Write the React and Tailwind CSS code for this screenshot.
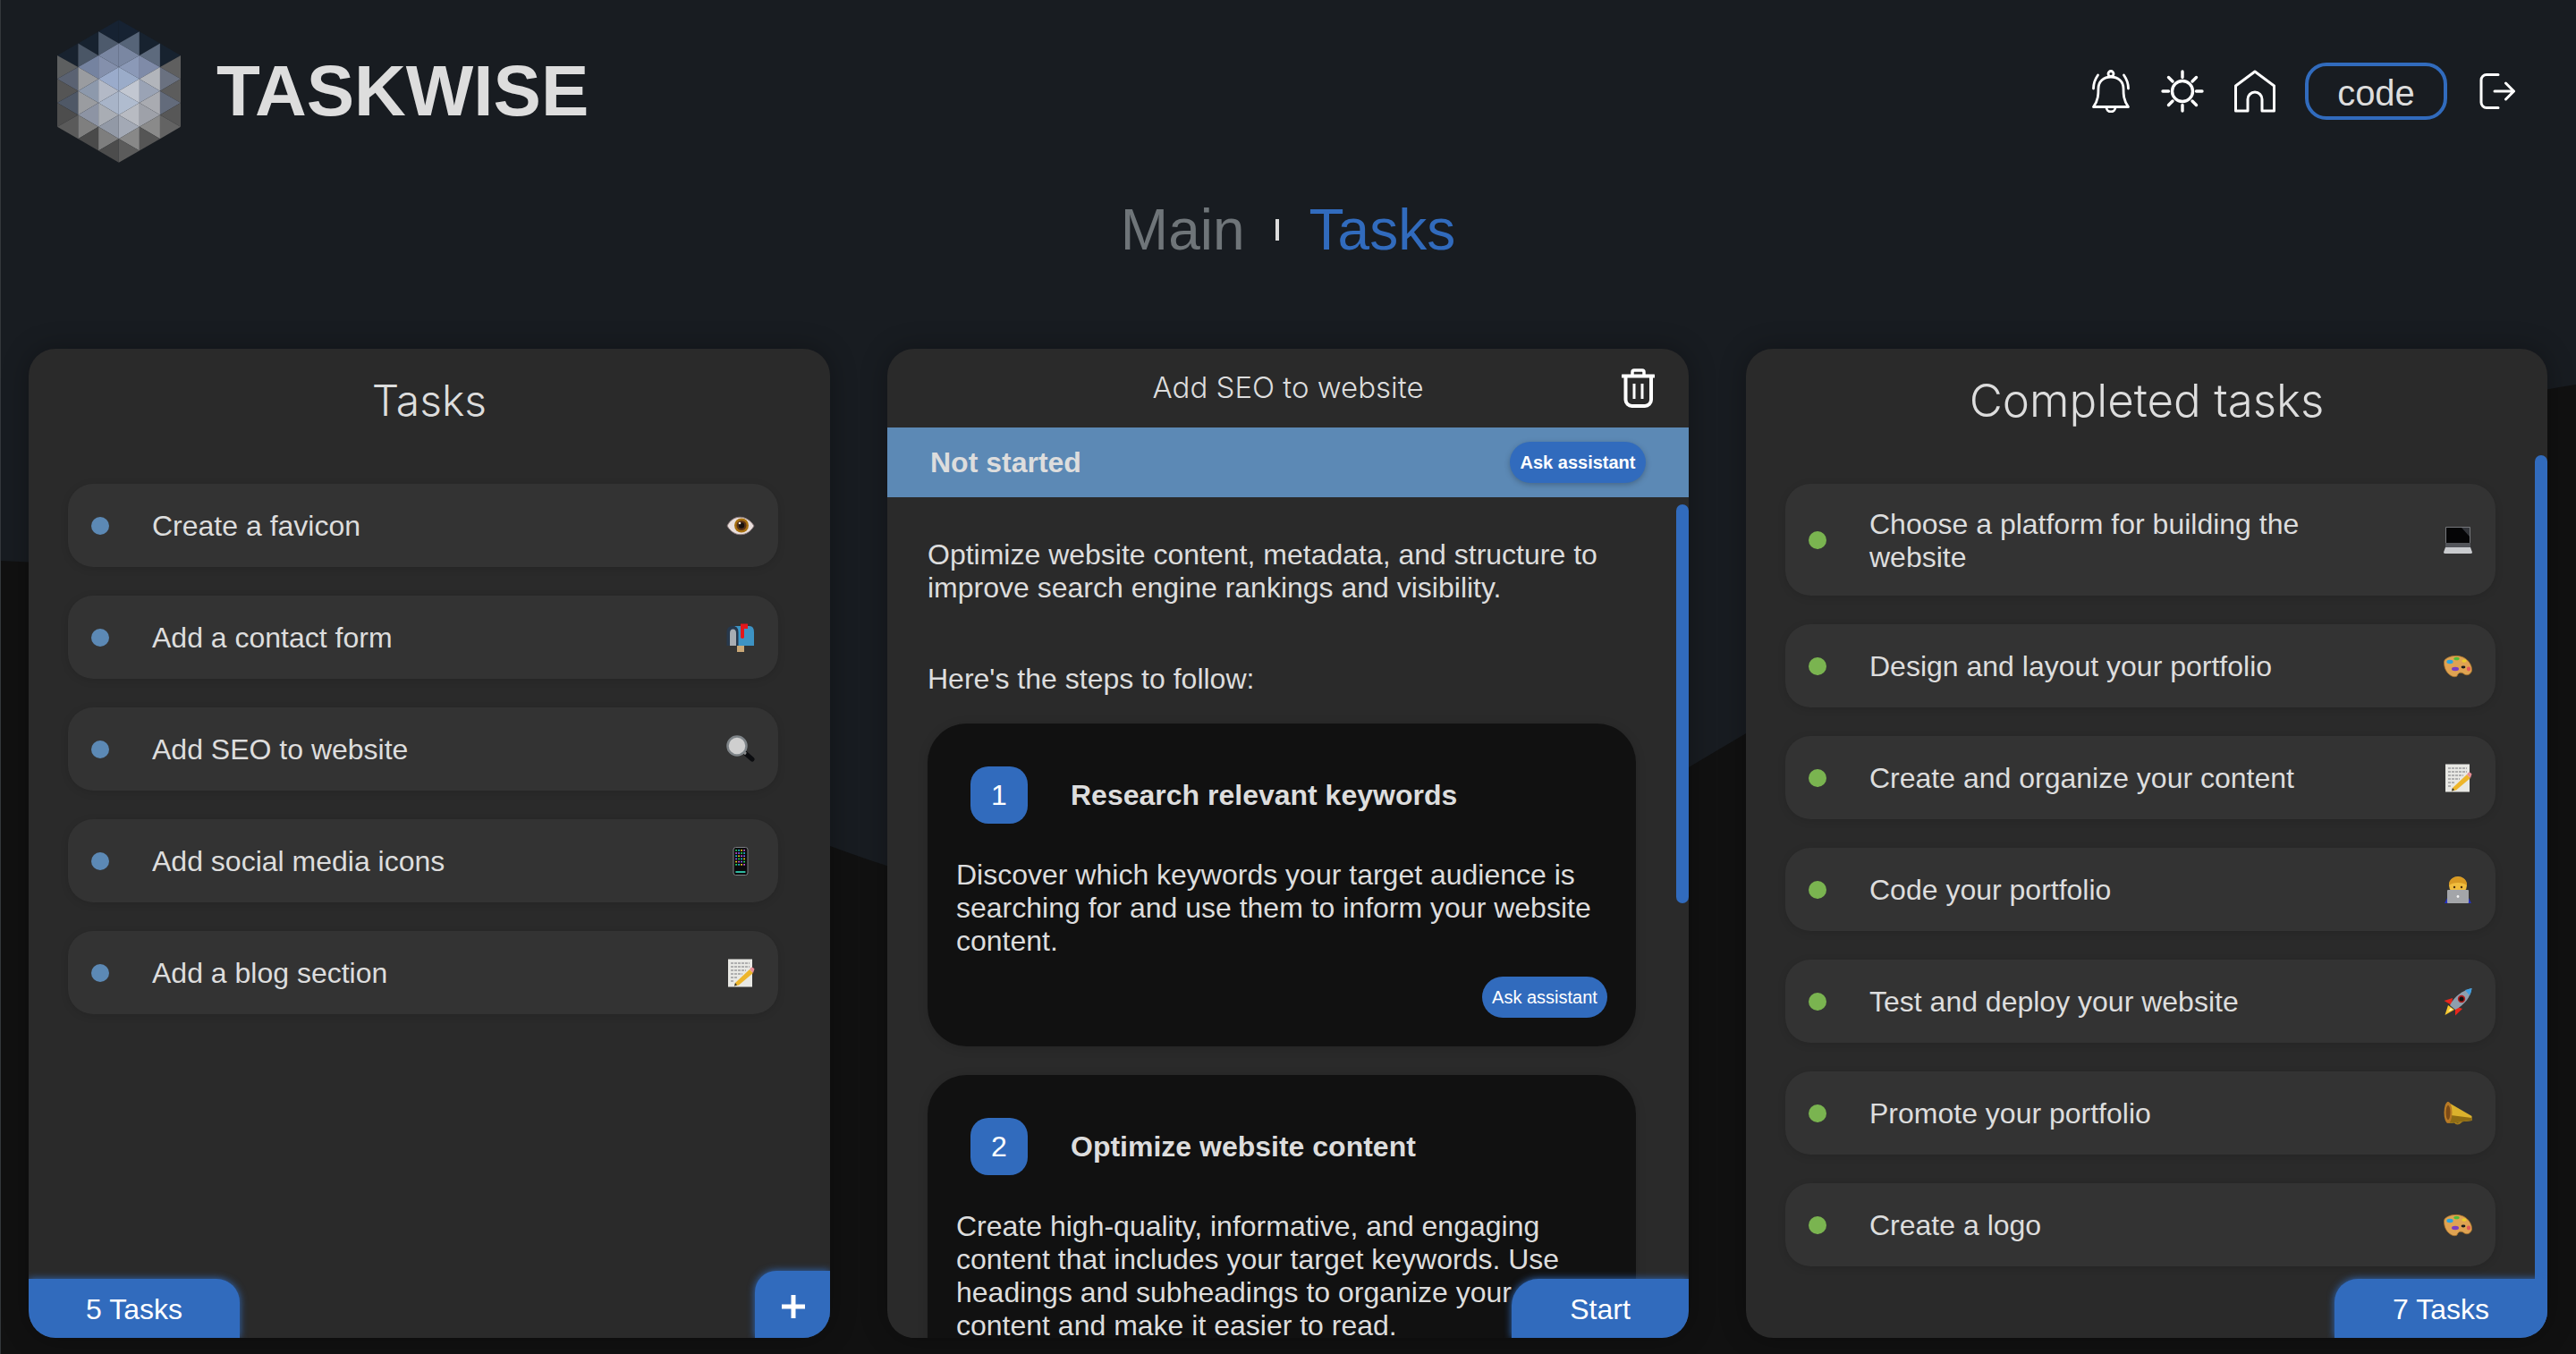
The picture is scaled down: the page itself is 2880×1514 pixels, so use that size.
const todo = [
  { label: 'Create a favicon', icon: 'eye' },
  { label: 'Add a contact form', icon: 'mailbox' },
  { label: 'Add SEO to website', icon: 'search' },
  { label: 'Add social media icons', icon: 'phone' },
  { label: 'Add a blog section', icon: 'memo' },
]

const done = [
  { label: 'Choose a platform for building the website', icon: 'laptop' },
  { label: 'Design and layout your portfolio', icon: 'palette' },
  { label: 'Create and organize your content', icon: 'memo' },
  { label: 'Code your portfolio', icon: 'coder' },
  { label: 'Test and deploy your website', icon: 'rocket' },
  { label: 'Promote your portfolio', icon: 'horn' },
  { label: 'Create a logo', icon: 'palette' },
]

const steps = [
  {
    n: 1,
    title: 'Research relevant keywords',
    text: 'Discover which keywords your target audience is searching for and use them to inform your website content.',
  },
  {
    n: 2,
    title: 'Optimize website content',
    text: 'Create high-quality, informative, and engaging content that includes your target keywords. Use headings and subheadings to organize your content and make it easier to read.',
  },
]

// logo lattice, one list of colours per vertical strip, top to bottom
const strips = [
  { x: [192, 262], ys: [146, 186, 225, 265, 305, 345, 385, 425, 465], first: 1, fill: ['#18222f', '#5d5f60', '#5a6272', '#555555', '#4f5866', '#4d4d4d', '#5a5a5a'] },
  { x: [262, 330], ys: [106, 146, 186, 225, 265, 305, 345, 385, 425, 465, 505], first: 1, fill: ['#17222f', '#4a5666', '#7583a0', '#9a9ca0', '#8d99ac', '#9a9ca0', '#8d94a4', '#7f7f7f', '#4a4a4a'] },
  { x: [330, 398], ys: [67, 106, 146, 186, 225, 265, 305, 345, 385, 425, 465, 505, 545], first: 1, fill: ['#162232', '#4d5a6c', '#7a87a2', '#8490ac', '#9aabcb', '#b3b9c6', '#a8b4c8', '#a9adb4', '#9299a6', '#7e7e7e', '#4c4c4c'] },
  { x: [398, 467], ys: [67, 106, 146, 186, 225, 265, 305, 345, 385, 425, 465, 505, 545], first: 0, fill: ['#162232', '#566478', '#7a87a2', '#8b99b7', '#9bacc9', '#c2c7d1', '#b0bccf', '#b8bbc2', '#a3a9b5', '#888888', '#5b5b5b'] },
  { x: [467, 536], ys: [106, 146, 186, 225, 265, 305, 345, 385, 425, 465, 505], first: 0, fill: ['#17222f', '#5d6a7d', '#7f8ba8', '#b2b5bb', '#9aa3b5', '#a9abb1', '#9ea1a9', '#8a8a8a', '#555555'] },
  { x: [536, 605], ys: [146, 186, 225, 265, 305, 345, 385, 425, 465], first: 0, fill: ['#17222f', '#5f5f5f', '#6a7180', '#5c5c5c', '#636b7b', '#575757', '#636363'] },
]

function Logo() {
  return (
    <svg className="h-[160px] w-[138px] shrink-0" viewBox="192 67 413 478">
      {strips.map((strip) =>
        strip.fill.map((fill, i) => {
          const pts = [0, 1, 2].map((k) => `${strip.x[(i + k + strip.first) % 2]},${strip.ys[i + k]}`)
          return <polygon fill={fill} key={`${strip.x[0]}-${i}`} points={pts.join(' ')} />
        }),
      )}
    </svg>
  )
}

function Emoji({ name }) {
  const cls = 'h-8 w-8 shrink-0'
  if (name === 'eye') {
    return (
      <svg className={cls} viewBox="0 0 32 32">
        <path d="M1 16 C7 3 23 3 31 16 C24 29 8 29 1 16Z" fill="#e9dfdc" stroke="#8b7a7c" strokeWidth="1" />
        <circle cx="17" cy="15.5" r="8" fill="#a8700f" />
        <circle cx="17" cy="15.5" r="5.5" fill="#5a3318" />
        <circle cx="17" cy="15.5" r="3.2" fill="#17100c" />
        <circle cx="15" cy="13" r="1.3" fill="#f4e9e2" />
      </svg>
    )
  }
  if (name === 'mailbox') {
    return (
      <svg className={cls} viewBox="0 0 32 32">
        <rect fill="#c9a877" height="7" width="8" x="12" y="25" />
        <path d="M7 3 H26 Q31 3 31 10 V25 H13 V10 Q13 3 7 3Z" fill="#3d93c4" />
        <path d="M0.5 25 V10 Q0.5 3 7 3 Q13.5 3 13.5 10 V25Z" fill="#27384c" />
        <path d="M4 25 V11 Q4 6.5 7.5 6.5 Q11 6.5 11 11 V25Z" fill="#a8adb3" />
        <path d="M16 0.5 H24 V6 H20 V16 Q18 18 16 16Z" fill="#e3171b" />
      </svg>
    )
  }
  if (name === 'search') {
    return (
      <svg className={cls} viewBox="0 0 32 32">
        <path d="M21 20 L29 27" stroke="#0c0d10" strokeLinecap="round" strokeWidth="5" />
        <path d="M18 18 L22 21" stroke="#8d8d8d" strokeWidth="3" />
        <circle cx="12" cy="12" fill="#cfcfcf" r="10.5" stroke="#7e8488" strokeWidth="2.5" />
      </svg>
    )
  }
  if (name === 'phone') {
    const colors = ['#27e05f', '#f4f4f4', '#cc55dd', '#888888', '#22c5e0', '#f4f4f4', '#8866ff', '#f08a20', '#f0d020', '#f040a0']
    return (
      <svg className={cls} viewBox="0 0 32 32">
        <rect fill="#0a0a0c" height="31" rx="2.5" stroke="#7c7e82" strokeWidth="1" width="16" x="8" y="0.5" />
        {Array.from({ length: 24 }).map((_, i) => (
          <rect fill={colors[(i * 3 + (i % 4)) % colors.length]} height="1.6" key={i} width="1.8" x={10.2 + (i % 4) * 3} y={3 + Math.floor(i / 4) * 3.2} />
        ))}
        <rect fill="#2fb8a0" height="2" width="11" x="10.4" y="27" />
      </svg>
    )
  }
  if (name === 'memo') {
    return (
      <svg className={cls} viewBox="0 0 32 32">
        <rect fill="#e8e8e4" height="31" width="27" x="2" y="0.5" />
        <path d="M5 5 H26 M5 9 H26 M5 13 H22 M5 17 H18 M5 21 H12 M5 25 H9" stroke="#77777a" strokeDasharray="3 1" strokeWidth="1" />
        <path d="M10 27 L26 12 L30 16 L14 29.5 L9 30.5Z" fill="#edb52a" />
        <path d="M26 12 L28 9.5 Q29.5 9 31.5 11.5 L30 16Z" fill="#e58d95" />
        <path d="M9 30.5 L10 27 L12 29.5Z" fill="#333333" />
      </svg>
    )
  }
  if (name === 'laptop') {
    return (
      <svg className={cls} viewBox="0 0 32 32">
        <rect fill="#75777b" height="24" rx="1" width="28" x="2" y="1" />
        <rect fill="#050506" height="17" width="26" x="3" y="2" />
        <path d="M20 2 H29 V12Z" fill="#33353a" />
        <rect fill="#53555a" height="5" width="28" x="2" y="19" />
        <path d="M0 29.5 L2 24 H30 L32 29.5 Q32 31 30 31 H2 Q0 31 0 29.5Z" fill="#c9cbce" />
      </svg>
    )
  }
  if (name === 'palette') {
    return (
      <svg className={cls} viewBox="0 0 32 32">
        <path d="M0.5 11 C1 6 13 2 22 6 C28 9 32 15 31.5 21 C30 26 25 27 22 24 C18 22 16 24 15 27 C10 30 0 23 0.5 11Z" fill="#dfa352" stroke="#a8722a" strokeWidth="0.8" />
        <ellipse cx="7" cy="11" fill="#2aa4df" rx="3.6" ry="2.2" />
        <ellipse cx="14.5" cy="7.5" fill="#50bb3a" rx="3.2" ry="1.8" />
        <ellipse cx="23" cy="10" fill="#eccb2c" rx="2.6" ry="1.7" />
        <ellipse cx="13" cy="19" fill="#7a3ec0" rx="4" ry="2.2" />
        <ellipse cx="22" cy="17" fill="#1b1b1b" rx="2.4" ry="1.4" />
        <ellipse cx="28" cy="19" fill="#e35a5a" rx="2.2" ry="2.4" />
      </svg>
    )
  }
  if (name === 'coder') {
    return (
      <svg className={cls} viewBox="0 0 32 32">
        <path d="M1 31 L5 23 H27 L31 31Z" fill="#2230c4" />
        <circle cx="16" cy="11" fill="#f1bd3d" r="10" />
        <path d="M6 11 C5 -2 27 -2 26 11 C22 7 10 7 6 11Z" fill="#d99a23" />
        <circle cx="12" cy="13" fill="#4a3010" r="1.2" />
        <circle cx="20" cy="13" fill="#4a3010" r="1.2" />
        <rect fill="#a3a5a9" height="15" rx="1" width="24" x="4" y="16" />
        <circle cx="16" cy="23.5" fill="#f2f2f2" r="1.4" />
      </svg>
    )
  }
  if (name === 'rocket') {
    return (
      <svg className={cls} viewBox="0 0 32 32">
        <path d="M0.5 15 L10 12 L9 20Z" fill="#e8261c" />
        <path d="M13 31.5 L21 24 L13 21Z" fill="#e8261c" />
        <path d="M1.5 31 L5 20 L12 25Z" fill="#f8c92f" />
        <path d="M5 27 L8 23 L10 25Z" fill="#f6f0c0" />
        <path d="M7 20 C12 10 22 3 31.5 1 C30 11 23 20 13 25Z" fill="#8f9fae" />
        <path d="M24 3 L31.5 1 C31 4 30.5 7 29 9Z" fill="#3f9ee0" />
        <circle cx="20" cy="13" fill="#b02020" r="4.2" />
        <circle cx="20" cy="13" fill="#111111" r="2.6" />
      </svg>
    )
  }
  return (
    <svg className={cls} viewBox="0 0 32 32">
      <path d="M12 25 Q15 30 20 25" fill="none" stroke="#a47c1d" strokeWidth="2" />
      <path d="M4 3 L31.5 19 V24 L6 27Z" fill="#dcb22c" />
      <path d="M8 18 L31.5 21 V24 L6 27Z" fill="#8f6c14" />
      <ellipse cx="5" cy="15" fill="#b87a25" rx="4.5" ry="12" />
      <ellipse cx="5" cy="15" fill="#7b4a16" rx="2.4" ry="8" />
    </svg>
  )
}

function TaskRow({ item, dot }) {
  const twoLines = item.label.length > 40
  return (
    <div className={`flex items-center rounded-[28px] bg-[#333333] pl-[26px] pr-[26px] shadow-[0_2px_10px_rgba(0,0,0,0.12)] ${twoLines ? 'h-[125px]' : 'h-[93px]'}`}>
      <span className={`h-5 w-5 shrink-0 rounded-full ${dot}`} />
      <span className="ml-12 mr-16 flex-1 pt-[2px] text-[32px] leading-[37px] text-[#dddddd]">{item.label}</span>
      <Emoji name={item.icon} />
    </div>
  )
}

function CountTab({ children, className }) {
  return (
    <button className={`absolute bottom-0 z-10 flex h-[66px] items-center justify-center bg-[#316bbd] pt-[2px] text-[32px] text-white shadow-[0_0_8px_#316bbd] ${className}`} type="button">
      {children}
    </button>
  )
}

function ListPanel({ title, titleSize, items, dot, count, scroll, add }) {
  return (
    <section className="relative flex flex-col overflow-hidden rounded-[30px] bg-[#2a2a2a] shadow-[0_0_30px_rgba(0,0,0,0.3)]">
      <h2 className={`flex h-[116px] shrink-0 items-center justify-center font-['Inter',sans-serif] font-light text-[#dddddd] ${titleSize}`}>{title}</h2>
      <div className="mt-[35px] flex w-[794px] flex-col gap-8 self-start ml-11">
        {items.map((item) => (
          <TaskRow dot={dot} item={item} key={item.label} />
        ))}
      </div>
      {scroll && <div className="absolute bottom-0 right-0 top-[119px] w-[14px] rounded-t-full bg-[#316bbd]" />}
      <CountTab className={add ? 'left-0 w-[236px] rounded-tr-[26px] rounded-bl-[30px]' : 'right-0 w-[238px] rounded-tl-[26px] rounded-br-[30px]'}>{count}</CountTab>
      {add && (
        <button className="absolute bottom-0 right-0 z-10 flex h-[75px] w-[84px] items-center justify-center rounded-tl-[24px] rounded-br-[24px] bg-[#316bbd] pl-[2px] pt-1 shadow-[0_0_8px_#316bbd]" type="button">
          <svg className="h-[26px] w-[26px]" viewBox="0 0 26 26">
            <path d="M13 0 V26 M0 13 H26" stroke="#fff" strokeWidth="5" />
          </svg>
        </button>
      )}
    </section>
  )
}

function StepCard({ step }) {
  return (
    <div className="rounded-[44px] bg-[#111111] pb-8 pl-8 pr-8 pt-12 shadow-[0_2px_12px_rgba(0,0,0,0.15)]">
      <div className="flex items-center pl-4">
        <span className="flex h-16 w-16 shrink-0 items-center justify-center rounded-[20px] bg-[#316bbd] text-[32px] text-white">{step.n}</span>
        <h3 className="ml-12 text-[32px] font-bold text-[#dddddd]">{step.title}</h3>
      </div>
      <p className="mt-[39px] text-[32px] leading-[37px] text-[#dddddd]">{step.text}</p>
      <div className="mt-[21px] flex justify-end">
        <button className="h-[46px] w-[140px] rounded-[23px] bg-[#316bbd] text-[20px] text-white" type="button">Ask assistant</button>
      </div>
    </div>
  )
}

function DetailPanel() {
  return (
    <section className="relative flex flex-col overflow-hidden rounded-[30px] bg-[#2a2a2a] shadow-[0_0_30px_rgba(0,0,0,0.3)]">
      <header className="grid h-[88px] shrink-0 grid-cols-[1fr_auto_1fr] items-center">
        <span />
        <h2 className="font-['Inter',sans-serif] text-[33px] font-light text-[#dddddd]">Add SEO to website</h2>
        <svg className="mr-[38px] h-[44px] w-[37px] justify-self-end" fill="none" stroke="#fff" viewBox="0 0 37 44">
          <path d="M1 8.5 H36" strokeLinecap="round" strokeWidth="4" />
          <path d="M12 7 V4 a2 2 0 0 1 2-2 h9 a2 2 0 0 1 2 2 V7" strokeWidth="3.5" />
          <path d="M4.5 9 V35 a7 7 0 0 0 7 7 H26 a7 7 0 0 0 7-7 V9" strokeWidth="4" />
          <path d="M14 17 V34 M23 17 V34" strokeWidth="3" />
        </svg>
      </header>
      <div className="flex h-[78px] shrink-0 items-center justify-between bg-[#5c89b5] pl-12 pr-[48px]">
        <span className="text-[32px] font-bold text-[#dddddd]">Not started</span>
        <button className="h-[46px] w-[152px] rounded-[23px] bg-[#316bbd] text-[20px] font-bold text-white shadow-[0_2px_6px_rgba(0,0,0,0.25)]" type="button">Ask assistant</button>
      </div>
      <div className="flex-1 overflow-hidden pl-[45px] pt-[46px]">
        <div className="w-[792px]">
          <p className="text-[32px] leading-[37px] text-[#dddddd]">Optimize website content, metadata, and structure to improve search engine rankings and visibility.</p>
          <p className="mt-[65px] text-[32px] leading-[37px] text-[#dddddd]">Here's the steps to follow:</p>
          <div className="mt-[31px] flex flex-col gap-8">
            {steps.map((step) => (
              <StepCard key={step.n} step={step} />
            ))}
          </div>
        </div>
      </div>
      <div className="absolute right-0 top-[174px] h-[446px] w-[14px] rounded-full bg-[#316bbd]" />
      <CountTab className="right-0 w-[198px] rounded-tl-[30px] rounded-br-[30px]">Start</CountTab>
    </section>
  )
}

function Header() {
  return (
    <header className="flex items-center justify-between pl-16 pr-[68px] pt-[22px]">
      <div className="flex items-center">
        <Logo />
        <h1 className="ml-10 text-[80px] font-bold leading-none text-[#dddddd]">TASKWISE</h1>
      </div>
      <div className="flex items-center text-white">
        <svg className="h-12 w-[42px]" fill="none" stroke="currentColor" strokeLinecap="round" strokeLinejoin="round" strokeWidth="2.8" viewBox="0 0 42 48">
          <path d="M1.5 41.5 H40.5 C35 34 35 27 35 21 C35 13 29 8 21 8 C13 8 7 13 7 21 C7 27 7 34 1.5 41.5Z" />
          <circle cx="21" cy="4.5" r="3" />
          <path d="M16 42 a5 5 0 0 0 10 0" />
          <path d="M1.5 21 C1.5 15 3 11 6.5 6 M40.5 21 C40.5 15 39 11 35.5 6" />
        </svg>
        <svg className="ml-[35px] h-12 w-12" fill="none" stroke="currentColor" strokeLinecap="round" strokeWidth="3.4" viewBox="0 0 48 48">
          <circle cx="24" cy="24" r="11.5" />
          <path d="M24 2 V8.5 M24 39.5 V46 M2 24 H8.5 M39.5 24 H46 M8.5 8.5 L13 13 M35 35 L39.5 39.5 M8.5 39.5 L13 35 M35 13 L39.5 8.5" />
        </svg>
        <svg className="ml-[33px] h-12 w-12" fill="none" stroke="currentColor" strokeLinecap="round" strokeLinejoin="round" strokeWidth="3" viewBox="0 0 48 48">
          <path d="M2.5 46 V18 L24 2 L45.5 18 V46 H32 V33 a8 8 0 0 0-16 0 V46Z" />
        </svg>
        <button className="ml-8 h-16 w-[159px] rounded-[24px] border-4 border-[#316bbd] pb-[6px] text-[40px] text-[#dddddd]" type="button">code</button>
        <svg className="ml-9 h-10 w-10" fill="none" stroke="currentColor" strokeLinecap="round" strokeLinejoin="round" strokeWidth="3" viewBox="0 0 40 40">
          <path d="M21 1.5 H8 a6 6 0 0 0-6 6 V32.5 a6 6 0 0 0 6 6 H21" />
          <path d="M17 20 H38 M29.5 11 L38.5 20 L29.5 29" />
        </svg>
      </div>
    </header>
  )
}

export default function App() {
  return (
    <div className="relative flex h-[1514px] w-[2880px] flex-col overflow-hidden bg-[#181c21] font-['Liberation_Sans',Arial,sans-serif]">
      <svg className="absolute inset-0 h-full w-full" viewBox="0 0 2880 1514">
        <path d="M0 627 C300 636 600 823 928 946 C1150 1030 1500 1088 1888 858 C2200 673 2500 490 2880 430 V1514 H0Z" fill="#111111" />
      </svg>
      <div className="absolute bottom-0 left-0 top-0 w-px bg-[#33373b]" />
      <div className="relative flex h-full flex-col pb-[18px]">
        <Header />
        <nav className="mt-[38px] flex h-[74px] items-center justify-center text-[64px]">
          <span className="text-[#6f7579]">Main</span>
          <span className="mx-[34px] h-6 w-1 bg-[#dddddd]" />
          <span className="text-[#316bbd]">Tasks</span>
        </nav>
        <main className="mt-[96px] grid min-h-0 flex-1 grid-cols-3 gap-16 px-8">
          <ListPanel add count="5 Tasks" dot="bg-[#5c89b5]" items={todo} title="Tasks" titleSize="text-[48px]" />
          <DetailPanel />
          <ListPanel count="7 Tasks" dot="bg-[#7ab450]" items={done} scroll title="Completed tasks" titleSize="text-[51px]" />
        </main>
      </div>
    </div>
  )
}
